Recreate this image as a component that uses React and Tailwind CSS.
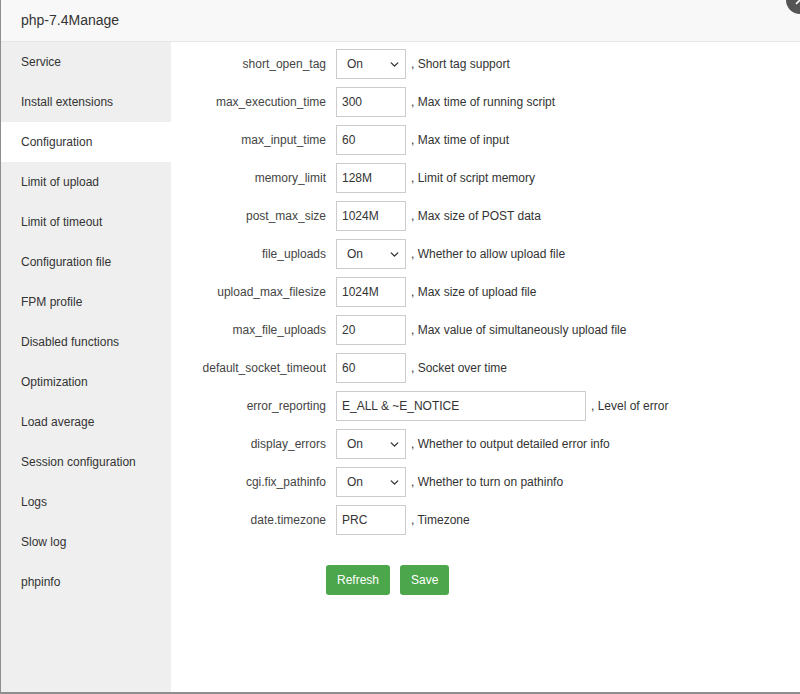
import React from 'react';
import { ChevronDown, X } from 'lucide-react';

const menu = [
    'Service', 'Install extensions', 'Configuration', 'Limit of upload', 'Limit of timeout',
    'Configuration file', 'FPM profile', 'Disabled functions', 'Optimization', 'Load average',
    'Session configuration', 'Logs', 'Slow log', 'phpinfo',
];

const rows = [
    { name: 'short_open_tag', type: 'select', value: 'On', desc: 'Short tag support' },
    { name: 'max_execution_time', value: '300', desc: 'Max time of running script' },
    { name: 'max_input_time', value: '60', desc: 'Max time of input' },
    { name: 'memory_limit', value: '128M', desc: 'Limit of script memory' },
    { name: 'post_max_size', value: '1024M', desc: 'Max size of POST data' },
    { name: 'file_uploads', type: 'select', value: 'On', desc: 'Whether to allow upload file' },
    { name: 'upload_max_filesize', value: '1024M', desc: 'Max size of upload file' },
    { name: 'max_file_uploads', value: '20', desc: 'Max value of simultaneously upload file' },
    { name: 'default_socket_timeout', value: '60', desc: 'Socket over time' },
    { name: 'error_reporting', value: 'E_ALL & ~E_NOTICE', desc: 'Level of error', wide: true },
    { name: 'display_errors', type: 'select', value: 'On', desc: 'Whether to output detailed error info' },
    { name: 'cgi.fix_pathinfo', type: 'select', value: 'On', desc: 'Whether to turn on pathinfo' },
    { name: 'date.timezone', value: 'PRC', desc: 'Timezone' },
];

const Field = ({ row }) => {
    if (row.type === 'select') {
        return (
            <div className="ml-[10px] flex h-[30px] w-[70px] items-center justify-between border border-[#ccc] bg-white pl-[10px] pr-[4px] text-[#333]">
                <span>{row.value}</span>
                <ChevronDown size={13} strokeWidth={2.5} className="text-[#333]" />
            </div>
        );
    }
    return (
        <div className={`ml-[10px] flex h-[30px] items-center border border-[#ccc] bg-white pl-[5px] text-[#333] ${row.wide ? 'w-[250px]' : 'w-[70px]'}`}>
            {row.value}
        </div>
    );
};

export default function App() {
    return (
        <div className="h-[694px] w-[800px] overflow-hidden bg-[#8e8e8e] pl-px text-[12px] text-[#333]" style={{ fontFamily: '"Liberation Sans", Arial, sans-serif' }}>
            <div className="relative flex h-[692px] flex-col bg-white">
                {/* close button */}
                <button className="absolute -right-[14px] -top-[14px] flex h-7 w-7 items-center justify-center rounded-full bg-[#555] text-white">
                    <X size={14} strokeWidth={3} />
                </button>

                <div className="flex h-[42px] shrink-0 items-center border-b border-[#e6e6e6] bg-[#f8f8f8] pl-5 text-[14px] text-[#333]">
                    php-7.4Manage
                </div>

                <div className="flex flex-1">
                    <div className="w-[170px] bg-[#efefef]">
                        {menu.map(item => (
                            <div
                                key={item}
                                className={`flex h-10 items-center pl-5 ${item === 'Configuration' ? 'bg-white' : ''}`}
                            >
                                {item}
                            </div>
                        ))}
                    </div>

                    <div className="flex-1 pt-[7px]">
                        {rows.map(row => (
                            <div key={row.name} className="mb-[8px] flex h-[30px] items-center">
                                <div className="w-[155px] text-right text-[#444]">{row.name}</div>
                                <Field row={row} />
                                <span className="ml-[5px]">, {row.desc}</span>
                            </div>
                        ))}

                        <div className="ml-[155px] mt-[30px] flex gap-[10px]">
                            <button className="h-[30px] rounded-[3px] bg-[#4ca64c] px-[11px] text-[12px] text-white">Refresh</button>
                            <button className="h-[30px] rounded-[3px] bg-[#4ca64c] px-[11px] text-[12px] text-white">Save</button>
                        </div>
                    </div>
                </div>
            </div>
        </div>
    );
}
